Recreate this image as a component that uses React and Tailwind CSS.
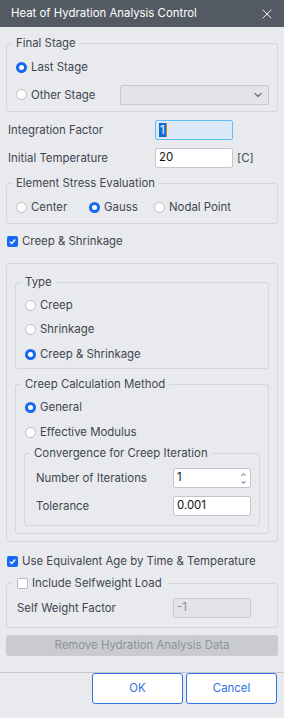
import React from "react";
import { X, ChevronDown, ChevronUp } from "lucide-react";

function Radio({ checked }) {
  return checked ? (
    <span className="w-[11px] h-[11px] rounded-full bg-[#1769ef] flex items-center justify-center shrink-0">
      <span className="w-[5px] h-[5px] rounded-full bg-white" />
    </span>
  ) : (
    <span className="w-[11px] h-[11px] rounded-full bg-white border border-[#b9bdc3] shrink-0" />
  );
}

function Check({ checked }) {
  return checked ? (
    <span className="w-[11px] h-[11px] rounded-[2px] bg-[#1769ef] flex items-center justify-center shrink-0">
      <svg width="9" height="9" viewBox="0 0 10 10">
        <path d="M2 5.2 L4.2 7.3 L8 2.8" fill="none" stroke="white" strokeWidth="1.6" />
      </svg>
    </span>
  ) : (
    <span className="w-[11px] h-[11px] rounded-[2px] bg-white border border-[#b9bdc3] shrink-0" />
  );
}

function RadioRow({ checked, label }) {
  return (
    <div className="h-4 flex items-center gap-[4px]">
      <Radio checked={checked} />
      <span className="pt-[1px]">{label}</span>
    </div>
  );
}

function Group({ legend, className = "", children }) {
  return (
    <fieldset className={`border border-[#d3d6db] rounded-[3px] ${className}`}>
      <legend className="ml-[5px] px-[4px] leading-4">{legend}</legend>
      {children}
    </fieldset>
  );
}

function Field({ value, className = "" }) {
  return (
    <div
      className={`w-[78px] h-5 bg-white border border-[#c3c6cb] rounded-[2px] flex items-center px-[3px] text-[#111] ${className}`}
    >
      {value}
    </div>
  );
}

export default function App() {
  return (
    <div
      className="w-[284px] h-screen bg-[#e9eaee] text-[11.4px] text-[#41464e] flex flex-col"
      style={{ fontFamily: "Inter, 'Noto Sans', sans-serif" }}
    >
      {/* Title bar */}
      <div className="h-[27px] bg-[#545a63] text-white flex items-center justify-between pl-[11px] pr-[9px]">
        <span>Heat of Hydration Analysis Control</span>
        <X size={16} strokeWidth={1.4} />
      </div>

      <div className="px-[6px] flex flex-col">
        {/* Final Stage */}
        <Group legend="Final Stage" className="mt-[8px]">
          <div className="pl-[9px] pr-[8px] pt-[6px] pb-[6px] flex flex-col gap-[8px]">
            <div className="h-5 flex items-center gap-[4px]">
              <Radio checked />
              <span className="pt-[1px]">Last Stage</span>
            </div>
            <div className="h-5 flex items-center">
              <div className="flex items-center gap-[4px] w-[104px]">
                <Radio />
                <span className="pt-[1px]">Other Stage</span>
              </div>
              <div className="flex-1 h-5 bg-[#e3e4e8] border border-[#c6c9ce] rounded-[2px] flex items-center justify-end pr-[4px]">
                <ChevronDown size={12} strokeWidth={2.8} className="text-[#6f747c]" />
              </div>
            </div>
          </div>
        </Group>

        {/* Integration factor */}
        <div className="mt-[8px] h-5 flex items-center pl-[2px]">
          <span className="w-[147px] pt-[1px]">Integration Factor</span>
          <div className="w-[78px] h-5 bg-[#dce8f8] border border-[#5ec3ee] rounded-[2px] flex items-center px-[3px]">
            <span className="bg-[#0b6fd6] text-white leading-[14px] px-[1px]">1</span>
            <span className="w-[1px] h-[14px] bg-[#e07a2b]" />
          </div>
        </div>

        <div className="mt-[8px] h-5 flex items-center pl-[2px]">
          <span className="w-[147px] pt-[1px]">Initial Temperature</span>
          <Field value="20" />
          <span className="ml-[4px] pt-[1px]">[C]</span>
        </div>

        {/* Element Stress Evaluation */}
        <Group legend="Element Stress Evaluation" className="mt-[7px]">
          <div className="pl-[9px] pt-[8px] pb-[8px] h-4 box-content flex items-center">
            <div className="w-[73px]">
              <RadioRow label="Center" />
            </div>
            <div className="w-[65px]">
              <RadioRow checked label="Gauss" />
            </div>
            <RadioRow label="Nodal Point" />
          </div>
        </Group>

        {/* Creep & Shrinkage */}
        <div className="mt-[9px] h-4 flex items-center gap-[4px] pl-[1px]">
          <Check checked />
          <span className="pt-[1px]">Creep &amp; Shrinkage</span>
        </div>

        <div className="mt-[14px] border border-[#d3d6db] rounded-[3px] px-[8px] pt-[10px] pb-[7px] flex flex-col">
          <Group legend="Type">
            <div className="pl-[9px] pt-[7px] pb-[6px] flex flex-col gap-[8px]">
              <RadioRow label="Creep" />
              <RadioRow label="Shrinkage" />
              <div className="mt-[1px]">
                <RadioRow checked label="Creep & Shrinkage" />
              </div>
            </div>
          </Group>

          <Group legend="Creep Calculation Method" className="mt-[7px]">
            <div className="px-[8px] pt-[7px] pb-[7px] flex flex-col">
              <div className="pl-[1px] flex flex-col gap-[9px]">
                <RadioRow checked label="General" />
                <RadioRow label="Effective Modulus" />
              </div>
              <Group legend="Convergence for Creep Iteration" className="mt-[5px]">
                <div className="pl-[11px] pr-[8px] pt-[7px] pb-[9px] flex flex-col gap-[8px]">
                  <div className="h-5 flex items-center justify-between">
                    <span className="pt-[1px]">Number of Iterations</span>
                    <div className="w-[78px] h-5 bg-white border border-[#c3c6cb] rounded-[2px] flex items-center justify-between pl-[3px] pr-[3px] text-[#111]">
                      <span>1</span>
                      <div className="flex flex-col text-[#8a8f96] gap-[1px]">
                        <ChevronUp size={7} strokeWidth={3.5} />
                        <ChevronDown size={7} strokeWidth={3.5} />
                      </div>
                    </div>
                  </div>
                  <div className="h-5 flex items-center justify-between">
                    <span className="pt-[1px]">Tolerance</span>
                    <Field value="0.001" />
                  </div>
                </div>
              </Group>
            </div>
          </Group>
        </div>

        {/* Equivalent age */}
        <div className="mt-[11px] h-4 flex items-center gap-[4px] pl-[1px]">
          <Check checked />
          <span className="pt-[1px]">Use Equivalent Age by Time &amp; Temperature</span>
        </div>

        <fieldset className="mt-[6px] border border-[#d3d6db] rounded-[3px]">
          <legend className="ml-[4px] px-[6px] leading-4 flex items-center gap-[4px]">
            <Check />
            <span>Include Selfweight Load</span>
          </legend>
          <div className="pl-[10px] pr-[26px] pt-[7px] pb-[9px] h-5 box-content flex items-center justify-between">
            <span className="pt-[1px]">Self Weight Factor</span>
            <div className="w-[78px] h-5 bg-[#e3e4e8] border border-[#c6c9ce] rounded-[2px] flex items-center px-[3px] text-[#8a8e95]">
              -1
            </div>
          </div>
        </fieldset>

        <div className="mt-[7px] h-[21px] bg-[#c9cbcf] rounded-[3px] flex items-center justify-center text-[#8e9298]">
          Remove Hydration Analysis Data
        </div>
      </div>

      {/* Footer */}
      <div className="mt-[16px] border-t border-[#c4c7cc] flex justify-end gap-[3px] pr-[7px]">
        <button className="w-[91px] h-[31px] bg-white border border-[#2f73e8] rounded-[3px] text-[#2f6fe0]">
          OK
        </button>
        <button className="w-[91px] h-[31px] bg-white border border-[#2f73e8] rounded-[3px] text-[#2f6fe0]">
          Cancel
        </button>
      </div>
    </div>
  );
}
